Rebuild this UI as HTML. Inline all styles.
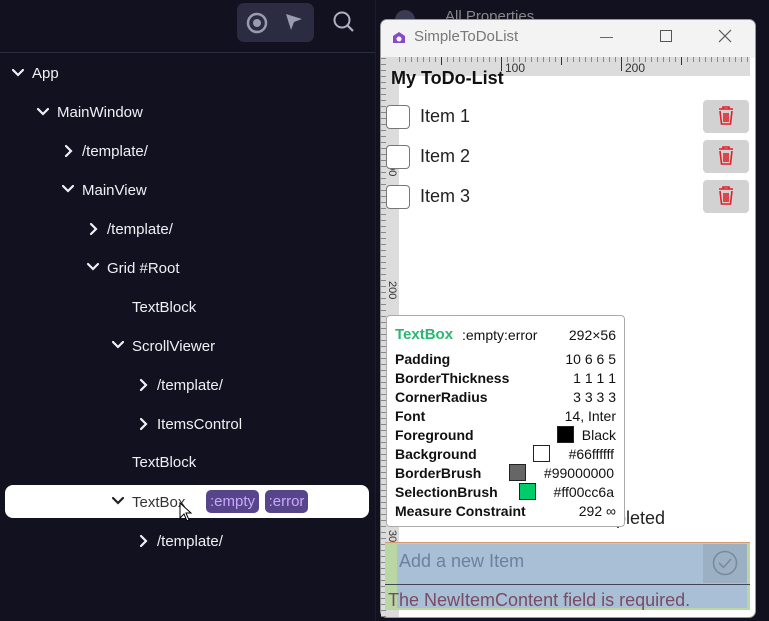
<!DOCTYPE html>
<html><head><meta charset="utf-8"><style>
*{margin:0;padding:0;box-sizing:border-box}
body{width:769px;height:621px;overflow:hidden;background:#11111f;font-family:"Liberation Sans",sans-serif;position:relative}
.a{position:absolute}
.row{position:absolute;color:#f0f0f5;font-size:15px;line-height:20px;white-space:nowrap}
.tip{font-size:14px;color:#111}
.tip .l{position:absolute;left:8px;font-weight:bold}
.tip .r{position:absolute;right:8px}
.sw{position:absolute;width:17px;height:17px;border:1px solid #222}
.del{position:absolute;left:703px;width:46px;height:33px;background:#d2d2d2;border-radius:4px}
.cb{position:absolute;left:386px;width:24px;height:24px;border:1.5px solid #777;border-radius:4px;background:#fff}
.item{position:absolute;left:420px;font-size:18px;color:#222}
</style></head><body>
<div class="a" style="left:0;top:52px;width:375px;height:1px;background:#2c2c40"></div>
<div class="a" style="left:375px;top:0;width:1px;height:621px;background:#1c1c2c"></div>
<div class="a" style="left:237px;top:3px;width:77px;height:39px;background:#2b2b42;border-radius:7px"></div>
<svg class="a" style="left:245px;top:11px" width="24" height="24"><circle cx="12" cy="12" r="9" fill="none" stroke="#9a9ab0" stroke-width="2.5"/><circle cx="12" cy="12" r="4" fill="#9a9ab0"/></svg>
<svg class="a" style="left:283px;top:11px" width="22" height="22"><path d="M3 3 L19 8 L11 11 L8 19 Z" fill="#9a9ab0"/></svg>
<svg class="a" style="left:332px;top:10px" width="24" height="24"><circle cx="10" cy="10" r="7.5" fill="none" stroke="#b0b0c0" stroke-width="2"/><path d="M15.5 15.5 L21 21" stroke="#b0b0c0" stroke-width="2.2"/></svg>
<div class="a" style="left:5px;top:485px;width:364px;height:33px;background:#fff;border-radius:8px"></div>
<div class="a" style="left:206px;top:490px;width:53px;height:23px;background:#56458a;border-radius:5px;color:#c9a8ff;font-size:15px;line-height:23px;text-align:center">:empty</div>
<div class="a" style="left:265px;top:490px;width:43px;height:23px;background:#56458a;border-radius:5px;color:#c9a8ff;font-size:15px;line-height:23px;text-align:center">:error</div>

<svg class="a" style="left:0;top:0" width="375" height="621" fill="none" stroke="#f0f0f5" stroke-width="2.2" stroke-linecap="round">
<path d="M13 70 L18 75 L23 70"/>
<path d="M38 109 L43 114 L48 109"/>
<path d="M66 146 L71 151 L66 156"/>
<path d="M63 186 L68 191 L73 186"/>
<path d="M91 224 L96 229 L91 234"/>
<path d="M88 264 L93 269 L98 264"/>
<path d="M113 342 L118 347 L123 342"/>
<path d="M141 380 L146 385 L141 390"/>
<path d="M141 419 L146 424 L141 429"/>
<path d="M113 498 L118 503 L123 498" stroke="#222"/>
<path d="M141 536 L146 541 L141 546"/>
</svg>
<div class="row" style="left:32px;top:64px">App</div>
<div class="row" style="left:57px;top:103px">MainWindow</div>
<div class="row" style="left:82px;top:142px">/template/</div>
<div class="row" style="left:82px;top:181px">MainView</div>
<div class="row" style="left:107px;top:220px">/template/</div>
<div class="row" style="left:107px;top:259px">Grid #Root</div>
<div class="row" style="left:132px;top:298px">TextBlock</div>
<div class="row" style="left:132px;top:337px">ScrollViewer</div>
<div class="row" style="left:157px;top:376px">/template/</div>
<div class="row" style="left:157px;top:415px">ItemsControl</div>
<div class="row" style="left:132px;top:453px">TextBlock</div>
<div class="row" style="left:132px;top:493px;color:#333">TextBox</div>
<div class="row" style="left:157px;top:532px">/template/</div>
<svg class="a" style="left:179px;top:502px" width="16" height="22"><path d="M1 1 L1 16 L5 12 L8 19 L10 18 L7 11 L12 11 Z" fill="#fff" stroke="#000" stroke-width="1"/></svg>

<div class="a" style="left:395px;top:10px;width:20px;height:20px;border-radius:50%;background:#3a3a50"></div>
<div class="a" style="left:445px;top:8px;color:#888;font-size:15px">All Properties</div>

<div class="a" style="left:380px;top:19px;width:376px;height:599px;background:#fff;border-radius:7px;border:1px solid #999;overflow:hidden">
  <div class="a" style="left:0;top:0;width:376px;height:38px;background:#f3f3f3"></div>
</div>
<svg class="a" style="left:391px;top:30px" width="16" height="16"><path d="M8 2 L14 6 L14 13 L2 13 L2 6 Z" fill="#8a4ac8"/><circle cx="8" cy="9" r="2.5" fill="#fff"/></svg>
<div class="a" style="left:414px;top:28px;font-size:15px;color:#777">SimpleToDoList</div>
<div class="a" style="left:600px;top:37px;width:13px;height:1px;background:#666"></div>
<div class="a" style="left:660px;top:30px;width:12px;height:12px;border:1px solid #555"></div>
<svg class="a" style="left:718px;top:29px" width="14" height="14"><path d="M1 1 L13 13 M13 1 L1 13" stroke="#555" stroke-width="1.2"/></svg>
<div class="a" style="left:381px;top:57px;width:369px;height:19px;background:#dcdcdc;background-image:repeating-linear-gradient(90deg,#888 0 1px,transparent 1px 6px);background-size:100% 5px;background-repeat:no-repeat"></div>
<div class="a" style="left:381px;top:57px;width:18px;height:560px;background:#dcdcdc;background-image:repeating-linear-gradient(0deg,#888 0 1px,transparent 1px 6px);background-size:5px 100%;background-repeat:no-repeat"></div>
<div class="a" style="left:441px;top:57px;width:1px;height:8px;background:#333"></div>
<div class="a" style="left:501px;top:57px;width:1px;height:14px;background:#333"></div>
<div class="a" style="left:561px;top:57px;width:1px;height:8px;background:#333"></div>
<div class="a" style="left:621px;top:57px;width:1px;height:14px;background:#333"></div>
<div class="a" style="left:681px;top:57px;width:1px;height:8px;background:#333"></div>
<div class="a" style="left:505px;top:61px;font-size:12px;color:#333">100</div>
<div class="a" style="left:625px;top:61px;font-size:12px;color:#333">200</div>
<div class="a" style="left:398px;top:158px;font-size:11px;color:#333;transform:rotate(90deg);transform-origin:left top">100</div>
<div class="a" style="left:398px;top:281px;font-size:11px;color:#333;transform:rotate(90deg);transform-origin:left top">200</div>
<div class="a" style="left:398px;top:530px;font-size:11px;color:#333;transform:rotate(90deg);transform-origin:left top">300</div>
<div class="a" style="left:391px;top:68px;font-size:18px;font-weight:bold;color:#111">My ToDo-List</div>
<div class="cb" style="top:105px"></div><div class="item" style="top:106px">Item 1</div>
<div class="cb" style="top:145px"></div><div class="item" style="top:146px">Item 2</div>
<div class="cb" style="top:185px"></div><div class="item" style="top:186px">Item 3</div>
<div class="del" style="top:100px"></div><div class="del" style="top:140px"></div><div class="del" style="top:180px"></div>
<svg class="a" style="left:716px;top:105px" width="20" height="140" fill="none" stroke="#e0202a" stroke-width="1.6">
<g><path d="M3 4 H17 M7 4 V2 H13 V4 M4 6 L5.5 19 H14.5 L16 6 M8 8 V17 M10 8 V17 M12 8 V17"/></g>
<g transform="translate(0,40)"><path d="M3 4 H17 M7 4 V2 H13 V4 M4 6 L5.5 19 H14.5 L16 6 M8 8 V17 M10 8 V17 M12 8 V17"/></g>
<g transform="translate(0,80)"><path d="M3 4 H17 M7 4 V2 H13 V4 M4 6 L5.5 19 H14.5 L16 6 M8 8 V17 M10 8 V17 M12 8 V17"/></g>
</svg>
<div class="item" style="left:536px;top:508px">Hide Completed</div>
<div class="a" style="left:385px;top:542px;width:365px;height:68px;background:#b9d7a3;border-top:1px solid #d89a70"></div>
<div class="a" style="left:397px;top:544px;width:350px;height:64px;background:#a9bfd6"></div>
<div class="a" style="left:385px;top:584px;width:365px;height:1px;background:#445"></div>
<div class="a" style="left:703px;top:544px;width:44px;height:39px;background:#9cb0c4"></div>
<svg class="a" style="left:711px;top:549px" width="28" height="28"><circle cx="14" cy="14" r="11.5" fill="none" stroke="#7a8a9a" stroke-width="1.6"/><path d="M8 14 L12.5 18.5 L20 10" fill="none" stroke="#7a8a9a" stroke-width="1.6"/></svg>
<div class="a" style="left:399px;top:551px;font-size:18px;color:#6a82a0">Add a new Item</div>
<div class="a" style="left:388px;top:590px;font-size:18px;color:#7a4a64">The NewItemContent field is required.</div>
<div class="a tip" style="left:386px;top:315px;width:239px;height:212px;background:#fff;border:1px solid #aaa;border-radius:4px">
 <div class="a" style="left:8px;top:10px;color:#2ab870;font-weight:bold;font-size:15px">TextBox</div>
 <div class="a" style="left:75px;top:11px">:empty:error</div>
 <div class="r" style="top:11px">292×56</div>
 <div class="l" style="top:35px">Padding</div><div class="r" style="top:35px">10 6 6 5</div>
 <div class="l" style="top:54px">BorderThickness</div><div class="r" style="top:54px">1 1 1 1</div>
 <div class="l" style="top:73px">CornerRadius</div><div class="r" style="top:73px">3 3 3 3</div>
 <div class="l" style="top:92px">Font</div><div class="r" style="top:92px">14, Inter</div>
 <div class="l" style="top:111px">Foreground</div><div class="sw" style="left:170px;top:110px;background:#000"></div><div class="r" style="top:111px">Black</div>
 <div class="l" style="top:130px">Background</div><div class="sw" style="left:146px;top:129px;background:#fff"></div><div class="r" style="top:130px;right:10px">#66ffffff</div>
 <div class="l" style="top:149px">BorderBrush</div><div class="sw" style="left:122px;top:148px;background:#666"></div><div class="r" style="top:149px;right:10px">#99000000</div>
 <div class="l" style="top:168px">SelectionBrush</div><div class="sw" style="left:132px;top:167px;background:#00cc6a"></div><div class="r" style="top:168px;right:10px">#ff00cc6a</div>
 <div class="l" style="top:187px">Measure Constraint</div><div class="r" style="top:187px">292 ∞</div>
</div>
</body></html>
